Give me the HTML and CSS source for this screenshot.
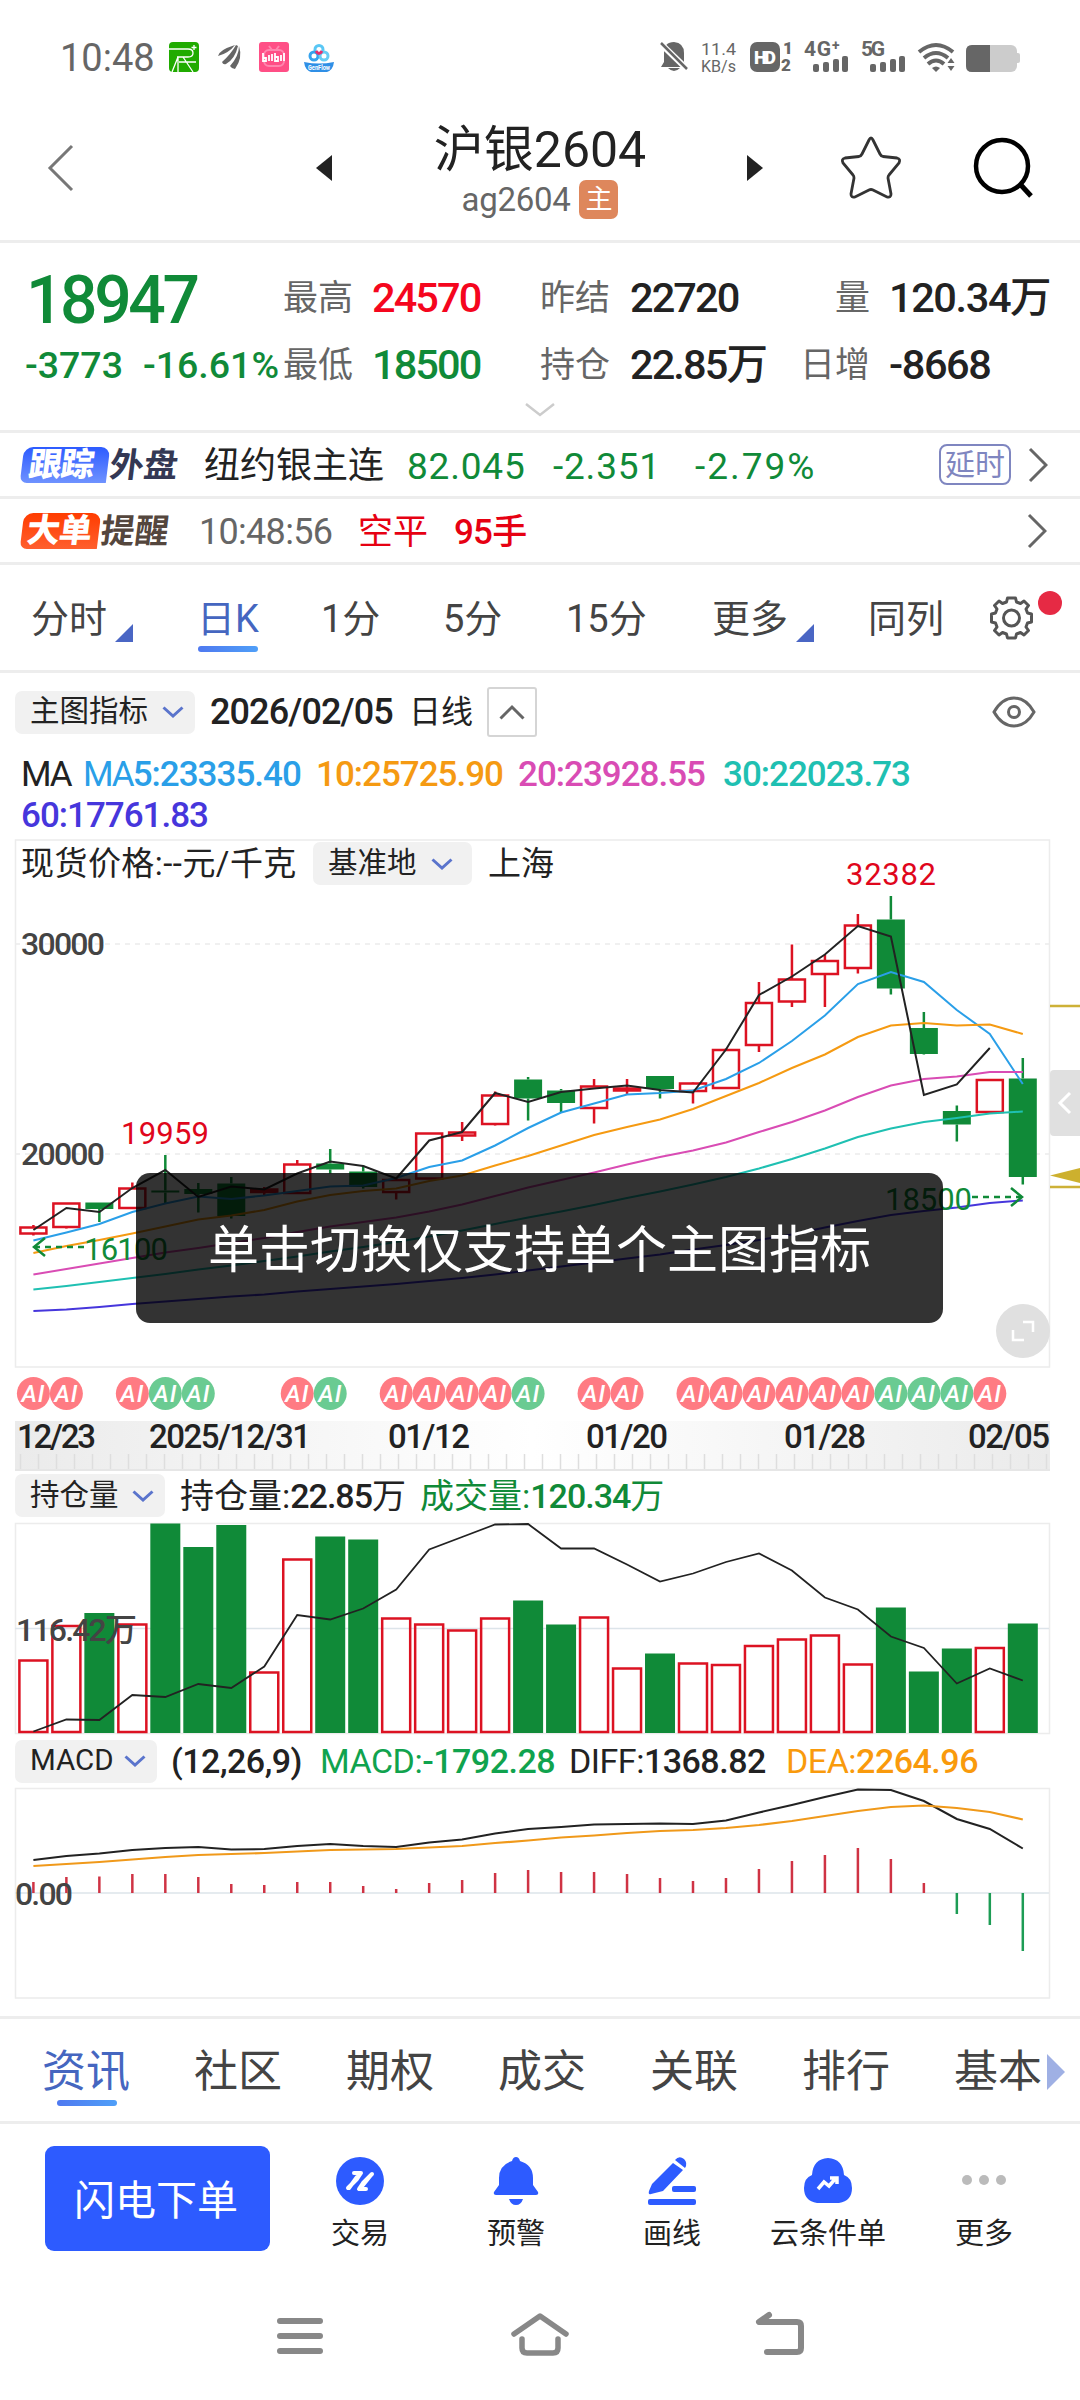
FILE: index.html
```html
<!DOCTYPE html>
<html lang="zh-CN">
<head>
    <meta charset="UTF-8">
    <meta name="viewport" content="width=device-width, initial-scale=1.0">
    <title>沪银2604</title>
    <link rel="stylesheet" href="styles.css">
</head>
<body>

<svg class="defs" width="0" height="0">
    <symbol id="down" viewBox="0 0 22 12"><path d="M1.5 1.5L11 10L20.5 1.5" fill="none" stroke="#5a74cc" stroke-width="3"/></symbol>
    <symbol id="right" viewBox="0 0 20 36"><path d="M2 2L18 18L2 34" fill="none" stroke="#666" stroke-width="3"/></symbol>
</svg>

<!-- status bar -->
<div class="status">
    <span class="clock">10:48</span>
    <svg class="apps" width="166" height="30" viewBox="0 0 166 30">
        <rect width="30" height="30" rx="4" fill="#20ab00"/>
        <path d="M0 7H19Q24 7 24 11T19 15H8M9 15V30M9 15L3 30M14 15L24 30M10 20H27M25 3V8M22.500 5.500H27.500" fill="none" stroke="#fff" stroke-width="1.300"/>
        <g fill="#666"><path d="M49 14Q50 8 66 3Q60 11 49 14Z"/><path d="M53 20Q62 12 67 3L69 4Q66 17 57 22Q54 23 53 20Z"/><path d="M61 24Q70 14 70 4Q74 16 66 27Q63 27 61 24Z"/></g>
        <rect x="90" width="30" height="30" rx="3" fill="#ff4f86"/>
        <rect x="95" y="8" width="20" height="16" rx="5" fill="none" stroke="#ff86ae" stroke-width="2"/>
        <path d="M100 4L103 8M110 4L107 8" stroke="#ff86ae" stroke-width="2"/>
        <path d="M94 11V19H97V16H94M100 13V19M103 12V19M106 11V19H109V15H106M112 13V19M115 11V19" fill="none" stroke="#fff" stroke-width="1.800"/>
        <g fill="none" stroke-width="3"><circle cx="150" cy="7.500" r="4" stroke="#59c7f5"/><circle cx="145" cy="14" r="4" stroke="#35a3ee"/><circle cx="155" cy="14" r="4" stroke="#68cdf5"/></g>
        <path d="M147 9Q150 14 153 9" stroke="#e5326e" stroke-width="3" fill="none"/>
        <path d="M135 20Q150 23 165 20Q164 28 158 30H142Q136 28 135 20Z" fill="#2f8fe6"/>
        <text class="genflow" x="150" y="28" text-anchor="middle" textLength="22" lengthAdjust="spacingAndGlyphs">GenFlow</text>
    </svg>
    <svg class="signals" width="362" height="34" viewBox="0 0 362 34">
        <g fill="#666">
            <path d="M4 22V13Q4 2 14 2Q24 3 24 13V22L26 27H1ZM8 28H20Q14 34 8 28Z"/>
            <path d="M-1 2L28 30" stroke="#fff" stroke-width="6"/><path d="M1 3L27 29" stroke="#666" stroke-width="2.500"/>
            <text class="net" x="41" y="15" textLength="35" lengthAdjust="spacingAndGlyphs">11.4</text>
            <text class="net" x="41" y="32" textLength="35" lengthAdjust="spacingAndGlyphs">KB/s</text>
            <rect x="90" y="2" width="30" height="30" rx="7"/>
            <text class="hd" x="94" y="24" textLength="22">HD</text>
            <text class="sub" x="123" y="14">1</text>
            <text class="sub" x="121" y="31">2</text>
            <text class="gen" x="144" y="16" textLength="36">4G⁺</text>
            <rect x="153" y="24" width="6" height="8" rx="2"/><rect x="163" y="22" width="6" height="10" rx="2"/><rect x="173" y="19" width="6" height="13" rx="2"/><rect x="182" y="16" width="6" height="16" rx="2"/>
            <text class="gen" x="201" y="16" textLength="24">5G</text>
            <rect x="210" y="24" width="6" height="8" rx="2"/><rect x="220" y="22" width="6" height="10" rx="2"/><rect x="230" y="19" width="6" height="13" rx="2"/><rect x="239" y="16" width="6" height="16" rx="2"/>
            <path d="M272 28L276 32L280 28Q276 25 272 28Z"/>
            <path d="M287.500 23H294.500L291 18ZM287.500 26H294.500L291 31Z"/>
        </g>
        <g fill="none" stroke="#666" stroke-width="4"><path d="M259 12Q276 -2 293 12"/><path d="M264 18Q276 8 288 18"/><path d="M268 24Q276 17 284 24"/></g>
        <rect x="306" y="5" width="51" height="27" rx="6" fill="#ccc"/><rect x="355" y="13" width="5" height="10" rx="2" fill="#ccc"/>
        <path d="M312 5H330V32H312Q306 32 306 26V11Q306 5 312 5Z" fill="#666"/>
    </svg>
</div>

<!-- title -->
<div class="header">
    <svg width="28" height="50" viewBox="0 0 28 50"><path d="M25 3L3 25L25 47" fill="none" stroke="#777" stroke-width="3"/></svg>
    <svg width="16" height="26" viewBox="0 0 16 26"><path d="M16 0V26L0 13Z" fill="#222"/></svg>
    <div class="title">
        <h1>沪银2604</h1>
        <p>ag2604<b>主</b></p>
    </div>
    <svg width="16" height="26" viewBox="0 0 16 26"><path d="M0 0V26L16 13Z" fill="#222"/></svg>
    <svg width="64" height="66" viewBox="0 0 64 66"><path d="M32 3Q33 3 34 5L41 19Q42 21 44 21.500L58 23Q62 24 60 28L50 40Q49 41 49 43L52 59Q52 63 48 62L34 55Q32 54 30 55L16 62Q12 63 12 59L15 43Q15 41 14 40L4 28Q2 24 6 23L20 21.500Q22 21 23 19L30 5Q31 3 32 3Z" fill="none" stroke="#333" stroke-width="2.800"/></svg>
    <svg width="60" height="62" viewBox="0 0 60 62"><circle cx="28" cy="29" r="26" fill="none" stroke="#000" stroke-width="4.500"/><path d="M46 47L57 59" stroke="#000" stroke-width="5"/></svg>
</div>

<!-- quote -->
<div class="quote">
    <div class="price">18947</div>
    <label>最高</label><span class="red">24570</span>
    <label>昨结</label><span>22720</span>
    <label class="end">量</label><span class="last">120.34万</span>
    <div class="change"><i>-3773</i><i>-16.61%</i></div>
    <label>最低</label><span class="green">18500</span>
    <label>持仓</label><span>22.85万</span>
    <label class="end">日增</label><span class="last">-8668</span>
</div>
<div class="unfold"><svg width="30" height="14" viewBox="0 0 30 14"><path d="M1 1L15 12L29 1" fill="none" stroke="#ccc" stroke-width="2.500"/></svg></div>

<div class="notice track">
    <div class="tag blue"><b>跟踪</b><em>外盘</em></div>
    <span class="name">纽约银主连</span>
    <span class="n1">82.045</span><span class="n2">-2.351</span><span class="n3">-2.79%</span>
    <span class="delay">延时</span>
    <svg width="20" height="36"><use href="#right"/></svg>
</div>
<div class="notice big">
    <div class="tag orange"><b>大单</b><em>提醒</em></div>
    <span class="time">10:48:56</span><span class="side">空平</span><span class="lots">95手</span>
    <svg width="20" height="36"><use href="#right"/></svg>
</div>

<!-- period tabs -->
<div class="periods">
    <span class="more">分时</span>
    <span class="on">日K</span>
    <span>1分</span>
    <span>5分</span>
    <span>15分</span>
    <span class="more">更多</span>
    <span>同列</span>
    <svg width="76" height="60" viewBox="0 0 76 60">
        <g transform="translate(23.500 33)" fill="none" stroke="#555" stroke-width="3" stroke-linejoin="round">
            <path d="M20 -4V4L16 5L14.500 9L17 12.500L12.500 17L9 14.500L5 16L4 20H-4L-5 16L-9 14.500L-12.500 17L-17 12.500L-14.500 9L-16 5L-20 4V-4L-16 -5L-14.500 -9L-17 -12.500L-12.500 -17L-9 -14.500L-5 -16L-4 -20H4L5 -16L9 -14.500L12.500 -17L17 -12.500L14.500 -9L16 -5Z"/>
            <circle r="8"/>
        </g>
        <circle cx="62" cy="18" r="12" fill="#e62a44"/>
    </svg>
</div>

<!-- main chart -->
<div class="bar main">
    <span class="pick">主图指标<svg width="22" height="12"><use href="#down"/></svg></span>
    <span class="date">2026/02/05</span>
    <span class="kind">日线</span>
    <span class="fold"><svg width="26" height="16" viewBox="0 0 26 16"><path d="M1.500 14.500L13 3L24.500 14.500" fill="none" stroke="#666" stroke-width="3"/></svg></span>
    <svg class="eye" width="44" height="32" viewBox="0 0 44 32"><path d="M2 16Q10 2 22 2T42 16Q34 30 22 30T2 16Z" fill="none" stroke="#666" stroke-width="3"/><circle cx="22" cy="16" r="5.500" fill="none" stroke="#666" stroke-width="3"/></svg>
</div>
<div class="ma">
    <span>MA</span>
    <span class="m5"><i>MA</i>5:23335.40</span>
    <span class="m10">10:25725.90</span>
    <span class="m20">20:23928.55</span>
    <span class="m30">30:22023.73</span>
    <span class="m60">60:17761.83</span>
</div>
<div class="kline">
    <svg id="kline" width="1080" height="528" viewBox="0 0 1080 528">
        <path class="frame" d="M15.500 0V527H1049.500V0Z"/>
        <path class="grid" d="M15 104H1049M15 314H1049"/>
    </svg>
    <div class="spot">
        <span class="cash">现货价格:--元/千克</span>
        <span class="pick">基准地<svg width="22" height="12"><use href="#down"/></svg></span>
        <span>上海</span>
    </div>
    <div class="toast">单击切换仅支持单个主图指标</div>
    <svg class="expand" width="54" height="54" viewBox="0 0 54 54"><circle cx="27" cy="27" r="27" fill="#e0e0e0"/><path d="M27 18H37V28M17 26V36H28" fill="none" stroke="#fff" stroke-width="2.500"/></svg>
</div>
<svg id="ai" class="block" width="1080" height="53" viewBox="0 0 1080 53"></svg>
<svg id="dates" class="block" width="1080" height="50" viewBox="0 0 1080 50">
    <linearGradient id="strip"><stop offset="0" stop-color="#ebebeb"/><stop offset=".5" stop-color="#fff"/><stop offset="1" stop-color="#ebebeb"/></linearGradient>
    <rect x="15" width="1035" height="50" fill="url(#strip)"/>
    <path d="M15 49H1050" stroke="#e6e6e6" stroke-width="2"/>
    <text x="17" y="27" textLength="79">12/23</text>
    <text x="149" y="27" textLength="162">2025/12/31</text>
    <text x="388" y="27" textLength="82">01/12</text>
    <text x="586" y="27" textLength="82">01/20</text>
    <text x="784" y="27" textLength="82">01/28</text>
    <text x="968" y="27" textLength="82">02/05</text>
</svg>

<!-- volume -->
<div class="bar vol">
    <span class="pick">持仓量<svg width="22" height="12"><use href="#down"/></svg></span>
    <span class="oi">持仓量:<i>22.85</i>万</span>
    <span class="turn">成交量:<i>120.34</i>万</span>
</div>
<svg id="volume" class="block" width="1080" height="212" viewBox="0 0 1080 212">
    <path class="frame" d="M15.500 .5V210.500H1049.500V.5Z"/>
    <path class="mid" d="M15 105.500H1049"/>
</svg>

<!-- macd -->
<div class="bar macd">
    <span class="pick">MACD<svg width="22" height="12"><use href="#down"/></svg></span>
    <span class="args">(12,26,9)</span>
    <span class="c1">MACD:<i>-1792.28</i></span>
    <span class="c2">DIFF:<i>1368.82</i></span>
    <span class="c3">DEA:<i>2264.96</i></span>
</div>
<svg id="macd" class="block" width="1080" height="228" viewBox="0 0 1080 228">
    <path class="frame" d="M15.500 .5V210H1049.500V.5Z"/>
    <path class="mid" d="M15 105H1049"/>
</svg>

<div class="sections">
    <span class="on">资讯</span><span>社区</span><span>期权</span><span>成交</span><span>关联</span><span>排行</span><span>基本</span>
    <svg width="18" height="36" viewBox="0 0 18 36"><path d="M0 0L18 18L0 36Z" fill="#9fb0e4"/></svg>
</div>

<div class="actions">
    <button>闪电下单</button>
    <a><svg width="48" height="48" viewBox="0 0 48 48"><circle cx="24" cy="24" r="24" fill="#2d5bff"/><path d="M18 16H25L21 22L12 31M36 17L27 26L23 32H30M21 20L13 31M35 18L27 28" fill="none" stroke="#fff" stroke-width="4" stroke-linejoin="round" stroke-linecap="round"/></svg>交易</a>
    <a><svg width="48" height="48" viewBox="0 0 48 48"><path d="M24 0Q27 0 28 4Q41 8 41 21V28L46 35Q47 38 44 38H4Q1 38 2 35L7 28V21Q7 8 20 4Q21 0 24 0ZM17 42H31Q29 48 24 48T17 42Z" fill="#2d5bff"/></svg>预警</a>
    <a><svg width="48" height="48" viewBox="0 0 48 48"><g fill="#2d5bff"><path d="M25 6L35 13L15 34L3 37Q0 38 1 34L4 27ZM27 3Q31 -2 36 2Q40 6 37 11Z"/><rect x="24" y="29" width="24" height="6" rx="2"/><rect y="42" width="48" height="6" rx="2"/></g></svg>画线</a>
    <a><svg width="48" height="48" viewBox="0 0 48 48"><path d="M13 46Q0 44 0 31Q0 21 8 18Q9 2 24 1Q39 2 40 18Q48 21 48 31Q48 44 35 46Z" fill="#2d5bff"/><path d="M14 32L20 25L25 29L32 21M26 21H33V27" fill="none" stroke="#fff" stroke-width="3.500"/></svg>云条件单</a>
    <a><svg width="48" height="48" viewBox="0 0 48 48"><g fill="#bbb"><circle cx="7" cy="23" r="5"/><circle cx="24" cy="23" r="5"/><circle cx="41" cy="23" r="5"/></g></svg>更多</a>
</div>

<div class="nav">
    <svg width="46" height="36" viewBox="0 0 46 36"><path d="M3 3H43M3 18H43M3 33H43" stroke="#888" stroke-width="6" stroke-linecap="round"/></svg>
    <svg width="58" height="44" viewBox="0 0 58 44"><path d="M3 22L29 4L55 22M11 27V36Q11 41 16 41H42Q47 41 47 36V27" fill="none" stroke="#888" stroke-width="5.500" stroke-linecap="round" stroke-linejoin="round"/></svg>
    <svg width="50" height="44" viewBox="0 0 50 44"><path d="M14 3L4 10H42Q46 10 46 14V36Q46 40 42 40H12" fill="none" stroke="#888" stroke-width="6" stroke-linecap="round" stroke-linejoin="round"/></svg>
</div>

<script src="chart.js"></script>
</body>
</html>
```
FILE: styles.css
```css
*{
    padding: 0;
    margin: 0;
    box-sizing: border-box;
}

body{
    width: 1080px;
    height: 2400px;
    overflow: hidden;
    background-color: #fff;
    color: #222;
    font-family: Roboto, "Noto Sans CJK SC", sans-serif;
    line-height: 1;
    white-space: nowrap;
}

i{
    font-style: normal;
}
svg{
    flex: none;
    overflow: visible;
}
.defs{
    display: none;
}
.block{
    display: block;
}

.status{
    display: flex;
    align-items: center;
    height: 116px;
    padding-left: 60px;
    color: #666;
}
.clock{
    width: 109px;
    font-size: 38px;
}
.apps{
    margin-top: -2px;
}
.genflow{
    fill: #fff;
    font-size: 7px;
    font-weight: 700;
}
.signals{
    margin-left: 325px;
    margin-top: -2px;
}
.net{
    font-size: 17px;
}
.hd{
    fill: #fff;
    font-size: 18px;
    font-weight: 900;
}
.sub{
    font-size: 17px;
    font-weight: 900;
}
.gen{
    font-size: 21px;
    font-weight: 700;
}

.header{
    display: grid;
    grid-template-columns: 269px 117px 314px 92px 135px 60px;
    align-items: center;
    height: 127px;
    padding-left: 47px;
    padding-bottom: 24px;
    border-bottom: 3px solid #ededed;
}
.title{
    padding-top: 9px;
    width: 312px;
    text-align: center;
    margin-left: -49px;
}
.title h1{
    font-size: 50px;
    font-weight: 400;
}
.title p{
    display: flex;
    justify-content: center;
    align-items: center;
    margin-top: 5px;
    color: #666;
    font-size: 33px;
    letter-spacing: -.3px;
}
.title b{
    width: 39px;
    height: 39px;
    margin-left: 9px;
    border-radius: 7px;
    background-color: #de875c;
    color: #fff;
    font-size: 27px;
    font-weight: 400;
    line-height: 40px;
}

.quote{
    display: grid;
    grid-template-columns: 283px 89px 168px 90px 150px 90px 210px;
    grid-template-rows: 67px 67px;
    align-items: center;
    height: 151px;
    padding-top: 21px;
}
.quote label{
    padding-top: 1px;
    color: #666;
    font-size: 35px;
}
.quote .end{
    text-align: right;
}
.quote span{
    font-size: 41.500px;
    font-weight: 500;
    letter-spacing: -1.9px;
}
.quote .last{
    padding-left: 19px;
    letter-spacing: -1.4px;
}
.price{
    padding: 7px 0 0 26px;
    color: #108a38;
    font-size: 66px;
    font-weight: 500;
    letter-spacing: -3.4px;
}
.change{
    display: grid;
    grid-template-columns: 118px auto;
    padding: 2px 0 0 25px;
    color: #108a38;
    font-size: 37.500px;
    font-weight: 500;
}
.quote .red{
    color: #f5061e;
}
.quote .green{
    color: #108a38;
}
.unfold{
    height: 39px;
    padding-top: 9px;
    text-align: center;
    border-bottom: 3px solid #ededed;
}
.unfold svg{
    display: block;
    margin: 0 auto;
}

.notice{
    display: grid;
    align-items: center;
    height: 66px;
    padding-left: 22px;
    border-bottom: 3px solid #ededed;
    font-size: 36px;
}
.notice span{
    padding-top: 3px;
}
.track{
    grid-template-columns: 182px 203px 146px 142px 244px 89px 20px;
    color: #108a38;
}
.track .name{
    color: #222;
}
.n1, .n2, .n3{
    font-size: 37px;
    letter-spacing: .8px;
}
.n3{
    letter-spacing: 2px;
}
.notice .delay{
    width: 72px;
    height: 41px;
    padding: 0;
    border: 2px solid #7f86c0;
    border-radius: 8px;
    color: #7f86c0;
    font-size: 30px;
    line-height: 38px;
    text-align: center;
}
.big{
    grid-template-columns: 177px 159px 96px 573px 20px;
    color: #e60012;
}
.time{
    color: #666;
    font-size: 36px;
    letter-spacing: -.7px;
}
.side{
    font-size: 35px;
}
.lots{
    font-size: 35px;
    font-weight: 500;
    letter-spacing: -.8px;
}
.tag{
    display: flex;
    align-items: center;
    height: 36px;
    font-size: 34px;
    font-weight: 700;
}
.tag b{
    width: 86px;
    height: 36px;
    padding-left: 7px;
    border-radius: 9px 9px 0 7px;
    color: #fff;
    font-size: 33px;
    line-height: 36px;
    letter-spacing: -1px;
    transform: skewX(-7deg);
}
.tag em{
    padding: 1px 0 0 2px;
    font-style: normal;
    transform: skewX(-7deg);
}
.blue b{
    background: linear-gradient(#2d5bff, #6f92ff);
}
.blue em{
    color: #343854;
}
.orange b{
    width: 77px;
    padding-left: 5px;
    background: linear-gradient(#ff3c00, #ff5f2e);
}
.orange em{
    color: #54463d;
}

.periods{
    display: grid;
    grid-template-columns: 166px 124px 122px 123px 146px 156px 119px 76px;
    align-items: center;
    height: 108px;
    padding: 2px 0 0 31px;
    border-bottom: 3px solid #ededed;
    color: #444;
    font-size: 38px;
}
.periods svg{
    margin-left: 1px;
    margin-top: -8px;
}
.more{
    display: flex;
    align-items: flex-end;
}
.more::after{
    content: "";
    margin: 0 0 -4px 8px;
    border-left: 18px solid transparent;
    border-bottom: 18px solid #4a66c4;
}
.on{
    position: relative;
    color: #4566c0;
}
.on::after{
    content: "";
    position: absolute;
    left: 1px;
    bottom: -14px;
    width: 60px;
    height: 6px;
    border-radius: 3px;
    background: linear-gradient(90deg, #4f79f0, #4f9ff8);
}

.bar{
    display: grid;
    align-items: center;
    padding-left: 15px;
    font-size: 34px;
}
.pick{
    display: flex;
    justify-content: space-between;
    align-items: center;
    height: 43px;
    padding: 0 11px 0 15px;
    border-radius: 7px;
    background-color: #f1f1f1;
    font-size: 29.500px;
}
.bar i, .date, .args{
    font-weight: 500;
}
.main{
    grid-template-columns: 180px 15px 200px 77px 505px 44px;
    height: 78px;
}
.main .date{
    grid-column: 3;
    font-size: 36px;
    letter-spacing: -.9px;
}
.main .kind{
    margin-left: -1px;
    font-size: 32px;
}
.fold{
    display: flex;
    justify-content: center;
    align-items: center;
    width: 50px;
    height: 50px;
    border: 2px solid #d5d5d5;
    border-radius: 3px;
}
.ma{
    display: grid;
    grid-template-columns: 62px 233px 202px 205px 200px;
    grid-template-rows: 41px 41px;
    align-items: center;
    height: 89px;
    padding: 3px 0 0 21px;
    font-size: 35px;
    font-weight: 500;
    letter-spacing: -1px;
}
.ma span:first-child, .ma i{
    font-weight: 400;
    letter-spacing: -2px;
}
.m5{
    color: #2a9fe8;
}
.m10{
    color: #f59a12;
}
.m20{
    color: #d94cb4;
}
.m30{
    color: #1fc0b2;
}
.m60{
    grid-column: 1 / 3;
    color: #4636dc;
}

.kline{
    position: relative;
    height: 528px;
}
.spot{
    position: absolute;
    left: 21px;
    top: 2px;
    display: flex;
    align-items: center;
    font-size: 33px;
}
.cash{
    width: 277px;
    letter-spacing: .45px;
}
.spot .pick{
    width: 159px;
    margin: 0 16px 0 15px;
    padding: 0 19px 0 15px;
}
.toast{
    position: absolute;
    left: 136px;
    top: 333px;
    width: 807px;
    height: 150px;
    border-radius: 14px;
    background-color: rgba(0, 0, 0, .8);
    color: #fff;
    font-size: 51px;
    line-height: 155px;
    text-align: center;
}
.expand{
    position: absolute;
    left: 996px;
    top: 464px;
}

/* charts */
.frame{
    fill: none;
    stroke: #ececec;
    stroke-width: 1.500;
}
.grid{
    stroke: #ececec;
    stroke-width: 1.500;
    stroke-dasharray: 5 5;
}
.mid{
    stroke: #dde4ea;
    stroke-width: 1.500;
}
.rise{
    fill: none;
    stroke: #dc1222;
    stroke-width: 2.500;
}
.fall{
    fill: #108a38;
}
.stem{
    stroke-width: 2.500;
}
.axis{
    fill: #444;
    font-size: 32px;
    font-weight: 500;
}
.peak{
    fill: #e0061c;
    font-size: 31px;
}
.low{
    fill: #108a38;
    font-size: 31px;
}
.ai{
    fill: #fff;
    font-size: 24px;
    font-style: italic;
    font-weight: 500;
}
#dates text{
    fill: #222;
    font-size: 33px;
    font-weight: 500;
}
#dates line{
    stroke: #dedede;
    stroke-width: 1.500;
}

.vol{
    grid-template-columns: 150px 15px 240px auto;
    justify-content: start;
    height: 52px;
    padding-bottom: 3px;
}
.vol i{
    letter-spacing: -1px;
}
.oi{
    grid-column: 3;
}
.turn{
    color: #108a38;
}
.macd{
    grid-template-columns: 142px 14px 149px 249px 217px auto;
    justify-content: start;
    height: 53px;
    padding-bottom: 1px;
    letter-spacing: -.5px;
}
.macd .pick{
    letter-spacing: 0;
}
.args{
    grid-column: 3;
}
.c1{
    color: #10a34e;
}
.c3{
    color: #f99a0c;
}

.sections{
    display: grid;
    grid-template-columns: repeat(6, 152px) 93px 18px;
    align-items: center;
    height: 108px;
    padding: 3px 0 0 42px;
    border: solid #ededed;
    border-width: 3px 0;
    color: #444;
    font-size: 44px;
}
.sections .on::after{
    left: 15px;
    bottom: -12px;
}

.actions{
    display: grid;
    grid-template-columns: 237px repeat(5, 156px);
    height: 130px;
    padding: 22px 0 0 45px;
}
.actions button{
    width: 225px;
    height: 105px;
    padding: 0 3px 4px 0;
    border: none;
    border-radius: 9px;
    background-color: #2d5bff;
    color: #fff;
    font-family: inherit;
    font-size: 41px;
}
.actions a{
    display: flex;
    flex-direction: column;
    align-items: center;
    gap: 15px;
    padding-top: 11px;
    font-size: 29px;
}

.nav{
    display: grid;
    grid-template-columns: 234px 244px 50px;
    align-items: center;
    height: 64px;
    margin-top: 48px;
    padding-left: 277px;
}
.nav svg:first-child{
    margin-top: 4px;
}
```
FILE: chart.js
```js
// every chart shares the same 31 columns
const colX = i => 33.4 + 32.98 * i;

// [rise, body top, body bottom, high, low]
const candles = [
    [1, 387.5, 393.5, 385, 395.5], [1, 363.5, 387, 363, 388.5], [0, 362.5, 369, 362.5, 382],
    [1, 348.5, 368, 342.5, 368.5], [0, 350.5, 352.5, 315, 363], [0, 349, 354, 343, 372.5],
    [0, 343.5, 376, 337, 378.5], [1, 349.5, 352, 347, 356], [1, 324.5, 353, 320, 353.5],
    [0, 323.5, 329.5, 309, 333.5], [0, 331.5, 347, 325.5, 348.5], [1, 340, 352, 338, 359.5],
    [1, 293.5, 338.5, 293, 339], [1, 292.5, 295.5, 282, 301], [1, 255.5, 284, 251.5, 285.5],
    [0, 239.5, 258.5, 237, 280.5], [0, 250.5, 263, 249, 273], [1, 246.5, 268, 239, 283.5],
    [1, 248.5, 250.5, 239, 255], [0, 236, 249, 236, 258.5], [1, 243.5, 251, 242.5, 263.5],
    [1, 210, 248, 208.5, 249], [1, 163, 205, 142, 212], [1, 139.5, 161.5, 104.5, 167],
    [1, 121, 134, 115, 167], [1, 85.5, 128, 74, 133.5], [0, 79.5, 148.5, 56, 154.5],
    [0, 188, 214, 172, 214.5], [0, 271, 284.5, 265.5, 301.5], [1, 240, 272, 239, 273],
    [0, 238.5, 337, 218, 344.5]
];

const averages = {
    '#2a9fe8': [400.5, 392.5, 384, 372, 363.5, 356.5, 359, 355.5, 351, 346.5, 345.5, 338, 327, 320.5, 305.5, 288, 272.5, 263.5, 254.5, 253, 250.5, 239, 223, 201, 175.5, 144, 132, 142, 170, 194, 244],
    '#f59a12': [413, 406, 400, 393.5, 386.5, 379.5, 375.5, 370, 361.5, 355, 351, 348.5, 341, 335.5, 325.5, 316, 305.5, 295, 287, 279.5, 269, 256, 243, 228, 214.5, 197, 185.5, 183, 185.5, 184.5, 194],
    '#d94cb4': [434.5, 429, 423.5, 418, 412.5, 408, 403, 398, 392, 386.5, 382, 377.5, 371.5, 364.5, 356, 347.5, 340, 332.5, 324.5, 317, 310.5, 302.5, 292, 282, 270.5, 257, 245.5, 239, 236.5, 232, 232],
    '#1fc0b2': [449.5, 446, 442, 438, 434, 429.5, 425.5, 421, 416.5, 411.5, 407, 402, 396.5, 390.5, 384, 377.5, 371.5, 365, 358, 351.5, 344.5, 337, 328.5, 319, 308.5, 297, 288.5, 282, 278, 273.5, 271.5],
    '#4636dc': [471, 469.5, 467, 464, 461.5, 459, 456.5, 454.5, 451.5, 449, 446.5, 444, 441, 438, 434.5, 430.5, 426.5, 422.5, 418.5, 414.5, 409.5, 405, 400, 394.5, 387.5, 381, 375, 371, 367.5, 363, 360.5],
    '#222': [390, 368, 372, 348, 330, 357, 346.5, 349.5, 333.5, 321.5, 326, 338.5, 300.5, 292, 253, 262, 252, 248.5, 245.5, 250, 252.5, 209.5, 155, 136.5, 114.5, 86, 96.5, 255, 244.5, 208]
};

const signals = { 0: 1, 1: 1, 3: 1, 4: 0, 5: 0, 8: 1, 9: 0, 11: 1, 12: 1, 13: 1, 14: 1, 15: 0, 17: 1, 18: 1, 20: 1, 21: 1, 22: 1, 23: 1, 24: 1, 25: 1, 26: 0, 27: 0, 28: 0, 29: 1 };

const volumes = [137.5, 103, 90, 101.5, .5, 24, 2, 149.5, 36.5, 13.5, 16.5, 95.5, 101.5, 107.5, 95.5, 77.5, 101.5, 94.5, 145.5, 130.5, 140.5, 142, 123, 116.5, 112.5, 141.5, 84.5, 148.5, 125.5, 125, 100.5];
const holdings = [208.5, 196.5, 197, 172, 174, 161, 165, 143.5, 92, 96.5, 85.5, 66.5, 26.5, 14, 1.5, 1, 25.5, 25.5, 41.5, 58.5, 50.5, 39, 30.5, 47.5, 74.5, 86.5, 113.5, 125, 160.5, 145.5, 157.5];

const diff = [72, 68, 65.5, 62, 60, 59, 61.5, 61, 58, 56, 58, 59, 54.5, 51.5, 45.5, 41, 39, 36.5, 36, 35.5, 36, 32.5, 24.5, 17, 9, 1.5, 2, 13, 31, 41, 60.5];
const dea = [78, 76, 74, 71.5, 69, 67, 66, 65, 63.5, 62, 61.5, 61, 59.5, 58, 55, 52.5, 49.5, 47.5, 45, 43, 42, 40, 37, 33, 28, 23, 19, 17.5, 20, 24, 31.5];
const macd = [11, 16, 16.5, 19, 19, 16, 9, 8, 11, 11, 7, 4, 10, 13, 20, 23, 21, 21, 19, 15, 12, 15, 24, 32, 38, 45, 34, 10, -21, -32, -58];

function add(id, html) {
    document.getElementById(id).insertAdjacentHTML('beforeend', html);
}

function line(data, color, width) {
    const points = data.map((y, i) => colX(i).toFixed(1) + ',' + y).join(' ');
    return `<polyline points="${points}" fill="none" stroke="${color}" stroke-width="${width}"/>`;
}

function box(x, top, bottom, rise, w) {
    return rise
        ? `<rect class="rise" x="${x - w / 2 + 1}" y="${top}" width="${w - 2}" height="${bottom - top}"/>`
        : `<rect class="fall" x="${x - w / 2}" y="${top}" width="${w}" height="${bottom - top}"/>`;
}

let out = '';
candles.forEach(([rise, top, bottom, high, low], i) => {
    const x = colX(i);
    out += `<path class="stem" stroke="${rise ? '#dc1222' : '#108a38'}" d="M${x} ${high}V${top}M${x} ${bottom}V${low}"/>`;
    out += box(x, top, bottom, rise, 28);
});
for (const color in averages) {
    out += line(averages[color], color, 2);
}
out += `
    <text class="axis" x="21" y="115" textLength="84">30000</text>
    <text class="axis" x="21" y="324.5" textLength="84">20000</text>
    <text class="peak" x="121" y="304" textLength="88">19959</text>
    <text class="peak" x="846" y="45" textLength="90">32382</text>
    <text class="low" x="84" y="420" textLength="84">16100</text>
    <text class="low" x="885" y="369.5" textLength="87">18500</text>
    <path d="M84 407H36M972 357H1022" stroke="#108a38" stroke-width="2.5" stroke-dasharray="6 5"/>
    <path d="M45 398L34 407L45 416M1011 348L1022 357L1011 366" fill="none" stroke="#108a38" stroke-width="2.5"/>
    <path d="M1050 166H1080M1050 347H1080" stroke="#cdb137" stroke-width="2.5"/>
    <path d="M1050 335.500L1080 328V343Z" fill="#cdb02e"/>
    <path d="M1080 230H1054Q1050 230 1050 234V292Q1050 296 1054 296H1080Z" fill="#e0e0e0"/>
    <path d="M1070 253L1060 263L1070 273" fill="none" stroke="#fff" stroke-width="3"/>`;
add('kline', out);

out = '';
for (const i in signals) {
    const x = colX(+i);
    out += `<circle cx="${x}" cy="25.5" r="16.500" fill="${signals[i] ? '#ff7b83' : '#6acb92'}"/>`;
    out += `<text class="ai" x="${x - 12}" y="33.500" textLength="23">AI</text>`;
}
add('ai', out);

out = '';
for (let x = 20.5; x < 1048; x += 18) {
    out += `<line x1="${x}" x2="${x}" y1="33" y2="48"/>`;
}
add('dates', out);

out = '';
volumes.forEach((top, i) => {
    const rise = candles[i][0];
    out += box(colX(i), top, rise ? 209 : 210, rise, 30);
});
out += line(holdings, '#222', 1.8);
out += '<text class="axis" x="16" y="118" textLength="121">116.42万</text>';
add('volume', out);

out = '';
macd.forEach((h, i) => {
    out += `<path class="stem" stroke="${h > 0 ? '#cf3344' : '#1d9c55'}" d="M${colX(i)} 105V${105 - h}"/>`;
});
out += line(diff, '#222', 2) + line(dea, '#f0991a', 2.2);
out += '<text class="axis" x="15" y="116.500" textLength="58">0.00</text>';
add('macd', out);
```
